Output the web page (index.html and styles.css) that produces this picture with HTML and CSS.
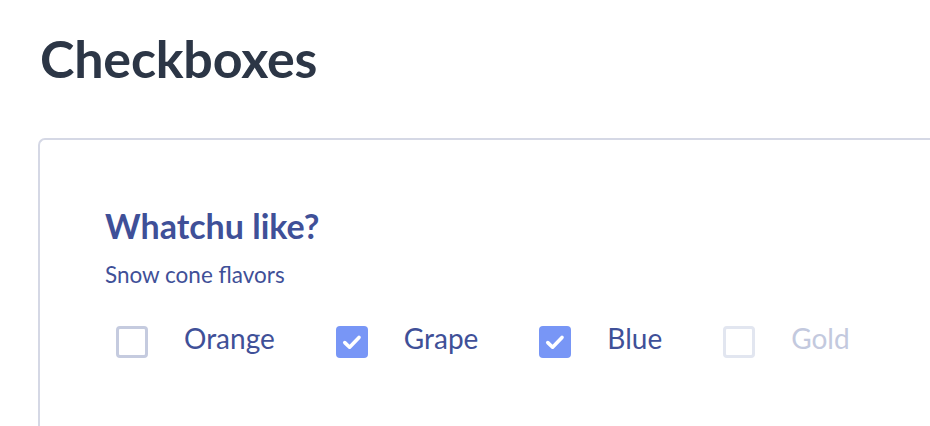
FILE: index.html
```html
<!DOCTYPE html>
<html lang="en">
<head>
<meta charset="utf-8">
<title>Checkboxes</title>
<link rel="stylesheet" href="styles.css">
</head>
<body>
<h1 class="title">Checkboxes</h1>
<section class="card">
  <fieldset class="group">
    <legend class="group-title">Whatchu like?</legend>
    <p class="group-hint">Snow cone flavors</p>
    <div class="options">
      <label class="option">
        <span class="box"></span>
        <span class="label">Orange</span>
      </label>
      <label class="option">
        <span class="box checked"><svg viewBox="0 0 32 32" width="32" height="32"><path d="M8.8 16.6 L13.6 21.2 L23 11.4" fill="none" stroke="#fff" stroke-width="3.6" stroke-linecap="round" stroke-linejoin="round"/></svg></span>
        <span class="label">Grape</span>
      </label>
      <label class="option">
        <span class="box checked"><svg viewBox="0 0 32 32" width="32" height="32"><path d="M8.8 16.6 L13.6 21.2 L23 11.4" fill="none" stroke="#fff" stroke-width="3.6" stroke-linecap="round" stroke-linejoin="round"/></svg></span>
        <span class="label">Blue</span>
      </label>
      <label class="option disabled">
        <span class="box"></span>
        <span class="label">Gold</span>
      </label>
    </div>
  </fieldset>
</section>
</body>
</html>
```
FILE: styles.css
```css
html, body {
  margin: 0;
  padding: 0;
  background: #ffffff;
}
body {
  font-family: Lato, "Open Sans", sans-serif;
  padding: 22px 0 0 38px;
  height: 426px;
  box-sizing: border-box;
  overflow: hidden;
}
.title {
  margin: 0 0 0 2px;
  font-size: 52px;
  line-height: 72px;
  font-weight: 700;
  color: #2c3646;
  letter-spacing: -0.2px;
}
.card {
  box-sizing: border-box;
  margin-top: 44px;
  border: 2px solid #d5d8e5;
  border-right: none;
  border-bottom: none;
  border-radius: 7px 0 0 0;
  height: 288px;
  padding: 64px 0 0 65px;
}
.group {
  border: none;
  margin: 0;
  padding: 0;
}
.group-title {
  padding: 0;
  font-size: 34px;
  line-height: 44px;
  font-weight: 700;
  color: #3f5098;
}
.group-hint {
  margin: 13px 0 0;
  font-size: 22.5px;
  line-height: 28px;
  color: #3f5098;
}
.options {
  display: flex;
  align-items: center;
  gap: 61px;
  margin-top: 33px;
  padding-left: 11px;
}
.option {
  display: flex;
  align-items: center;
  gap: 36px;
}
.box {
  box-sizing: border-box;
  width: 32px;
  height: 32px;
  border: 3px solid #c5cbdf;
  border-radius: 4px;
  display: block;
}
.box.checked {
  background: #7896f6;
  border: none;
}
.box svg {
  display: block;
}
.label {
  font-size: 28px;
  line-height: 32px;
  padding-bottom: 8px;
  color: #3f5098;
}
.option.disabled .box {
  border-color: #e2e6f0;
}
.option.disabled .label {
  color: #c3c9de;
}
```
